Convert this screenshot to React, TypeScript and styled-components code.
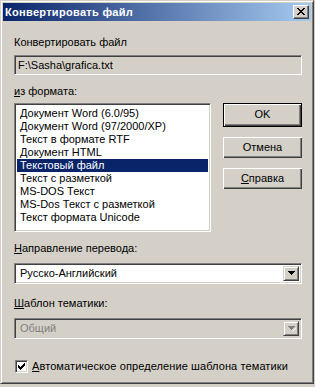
import React from "react";
import styled, { createGlobalStyle } from "styled-components";

const Global = createGlobalStyle`
  html, body { margin: 0; padding: 0; background: #d4d0c8; }
  body { font-family: "Liberation Sans", Arial, sans-serif; font-size: 11px; color: #000; }
  * { box-sizing: border-box; }
`;

const Window = styled.div`
  width: 314px;
  height: 384px;
  background: #d4d0c8;
  border-top: 1px solid #d4d0c8;
  border-left: 1px solid #d4d0c8;
  border-right: 1px solid #404040;
  border-bottom: 1px solid #404040;
  box-shadow: inset 1px 1px 0 #ffffff, inset -1px -1px 0 #808080;
  padding: 2px;
  display: flex;
  flex-direction: column;
`;

const TitleBar = styled.div`
  height: 18px;
  background: linear-gradient(to right, #0a246a, #a6caf0);
  display: flex;
  align-items: center;
  justify-content: space-between;
  padding: 0 2px 0 2px;
`;

const TitleText = styled.span`
  color: #fff;
  font-weight: bold;
  font-size: 11px;
  letter-spacing: 0.3px;
  line-height: 13px;
  white-space: nowrap;
`;

const CloseButton = styled.div`
  width: 16px;
  height: 14px;
  background: #d4d0c8;
  border-top: 1px solid #fff;
  border-left: 1px solid #fff;
  border-right: 1px solid #404040;
  border-bottom: 1px solid #404040;
  box-shadow: inset -1px -1px 0 #808080;
  display: flex;
  align-items: center;
  justify-content: center;
  padding-bottom: 1px;
`;

const Body = styled.div`
  flex: 1;
  display: flex;
  flex-direction: column;
  padding: 0 9px 0 11px;
`;

const Label = styled.div<{ $mt: number; $disabled?: boolean }>`
  margin-top: ${(p) => p.$mt}px;
  line-height: 13px;
  height: 13px;
  white-space: nowrap;
  color: ${(p) => (p.$disabled ? "#808080" : "#000")};
`;

const Sunken = styled.div<{ $mt?: number; $bg: string; $h: number }>`
  margin-top: ${(p) => p.$mt ?? 0}px;
  height: ${(p) => p.$h}px;
  background: ${(p) => p.$bg};
  border-top: 1px solid #808080;
  border-left: 1px solid #808080;
  border-right: 1px solid #fff;
  border-bottom: 1px solid #fff;
  box-shadow: inset 1px 1px 0 #404040, inset -1px -1px 0 #d4d0c8;
`;

const Field = styled(Sunken)`
  display: flex;
  align-items: center;
  padding: 0 3px;
  line-height: 13px;
  white-space: nowrap;
`;

const Row = styled.div`
  margin-top: 5px;
  display: flex;
  gap: 12px;
  align-items: flex-start;
`;

const ListBox = styled(Sunken)`
  width: 197px;
  padding: 3px 2px 2px 2px;
  display: flex;
  flex-direction: column;
`;

const ListItem = styled.div<{ $selected?: boolean }>`
  height: 13px;
  line-height: 13px;
  padding-left: 3px;
  white-space: nowrap;
  background: ${(p) => (p.$selected ? "#0a246a" : "transparent")};
  color: ${(p) => (p.$selected ? "#fff" : "#000")};
`;

const ButtonColumn = styled.div`
  width: 79px;
  display: flex;
  flex-direction: column;
  gap: 10px;
`;

const Button = styled.div<{ $default?: boolean }>`
  height: ${(p) => (p.$default ? 24 : 21)}px;
  display: flex;
  align-items: center;
  justify-content: center;
  line-height: 13px;
  background: #d4d0c8;
  border: ${(p) => (p.$default ? "1px solid #000" : "none")};
  box-shadow: inset 1px 1px 0 #fff, inset -1px -1px 0 #404040, inset -2px -2px 0 #808080;
  padding-bottom: 1px;
`;

const Combo = styled(Sunken)`
  display: flex;
  align-items: stretch;
  padding: 2px;
`;

const ComboText = styled.div<{ $disabled?: boolean }>`
  flex: 1;
  display: flex;
  align-items: center;
  padding-left: 3px;
  line-height: 13px;
  color: ${(p) => (p.$disabled ? "#808080" : "#000")};
  white-space: nowrap;
`;

const DropButton = styled.div`
  width: 16px;
  background: #d4d0c8;
  border-top: 1px solid #d4d0c8;
  border-left: 1px solid #d4d0c8;
  border-right: 1px solid #404040;
  border-bottom: 1px solid #404040;
  box-shadow: inset 1px 1px 0 #fff, inset -1px -1px 0 #808080;
  display: flex;
  align-items: center;
  justify-content: center;
  padding-left: 1px;
`;

const CheckRow = styled.div`
  margin-top: 21px;
  display: flex;
  align-items: center;
  gap: 4px;
  padding-left: 1px;
`;

const CheckBox = styled(Sunken)`
  width: 13px;
  display: flex;
  align-items: center;
  justify-content: center;
`;

const CheckLabel = styled.span`
  line-height: 13px;
  white-space: nowrap;
  letter-spacing: 0.1px;
`;

const pixelRects = (rows: string[], fill: string) =>
  rows.flatMap((r, y) =>
    r.split("").map((c, x) =>
      c === "X" ? <rect key={`${x}-${y}`} x={x} y={y} width={1} height={1} fill={fill} /> : null
    )
  );

const CloseIcon = () => (
  <svg width={8} height={7} shapeRendering="crispEdges">
    {pixelRects(
      ["XX....XX", ".XX..XX.", "..XXXX..", "...XX...", "..XXXX..", ".XX..XX.", "XX....XX"],
      "#000"
    )}
  </svg>
);

const Arrow = ({ disabled }: { disabled?: boolean }) => (
  <svg width={8} height={5} shapeRendering="crispEdges">
    {disabled && pixelRects([".", "........", ".......X", "......X.", ".....X.."], "#fff")}
    {pixelRects(["XXXXXXX", ".XXXXX.", "..XXX..", "...X..."], disabled ? "#808080" : "#000")}
  </svg>
);

const CheckMark = () => (
  <svg width={7} height={7} shapeRendering="crispEdges">
    {pixelRects(
      ["......X", ".....XX", "X...XXX", "XX.XXX.", "XXXXX..", ".XXX...", "..X...."],
      "#000"
    )}
  </svg>
);

const formats = [
  "Документ Word (6.0/95)",
  "Документ Word (97/2000/XP)",
  "Текст в формате RTF",
  "Документ HTML",
  "Текстовый файл",
  "Текст с разметкой",
  "MS-DOS Текст",
  "MS-Dos Текст с разметкой",
  "Текст формата Unicode",
];

export default function App() {
  return (
    <>
      <Global />
      <Window>
        <TitleBar>
          <TitleText>Конвертировать файл</TitleText>
          <CloseButton>
            <CloseIcon />
          </CloseButton>
        </TitleBar>
        <Body>
          <Label $mt={15}>Конвертировать файл</Label>
          <Field $mt={6} $h={20} $bg="#d4d0c8">F:\Sasha\grafica.txt</Field>
          <Label $mt={10}>
            <u>и</u>з формата:
          </Label>
          <Row>
            <ListBox $h={129} $bg="#fff">
              {formats.map((f, i) => (
                <ListItem key={f} $selected={i === 4}>
                  {f}
                </ListItem>
              ))}
            </ListBox>
            <ButtonColumn>
              <Button $default>OK</Button>
              <Button>Отмена</Button>
              <Button>
                <span>
                  <u>С</u>правка
                </span>
              </Button>
            </ButtonColumn>
          </Row>
          <Label $mt={10}>
            <u>Н</u>аправление перевода:
          </Label>
          <Combo $mt={8} $h={21} $bg="#fff">
            <ComboText>Русско-Английский</ComboText>
            <DropButton>
              <Arrow />
            </DropButton>
          </Combo>
          <Label $mt={13}>
            <u>Ш</u>аблон тематики:
          </Label>
          <Combo $mt={8} $h={21} $bg="#d4d0c8">
            <ComboText $disabled>Общий</ComboText>
            <DropButton>
              <Arrow disabled />
            </DropButton>
          </Combo>
          <CheckRow>
            <CheckBox $h={13} $bg="#fff">
              <CheckMark />
            </CheckBox>
            <CheckLabel>
              <u>А</u>втоматическое определение шаблона тематики
            </CheckLabel>
          </CheckRow>
        </Body>
      </Window>
    </>
  );
}
